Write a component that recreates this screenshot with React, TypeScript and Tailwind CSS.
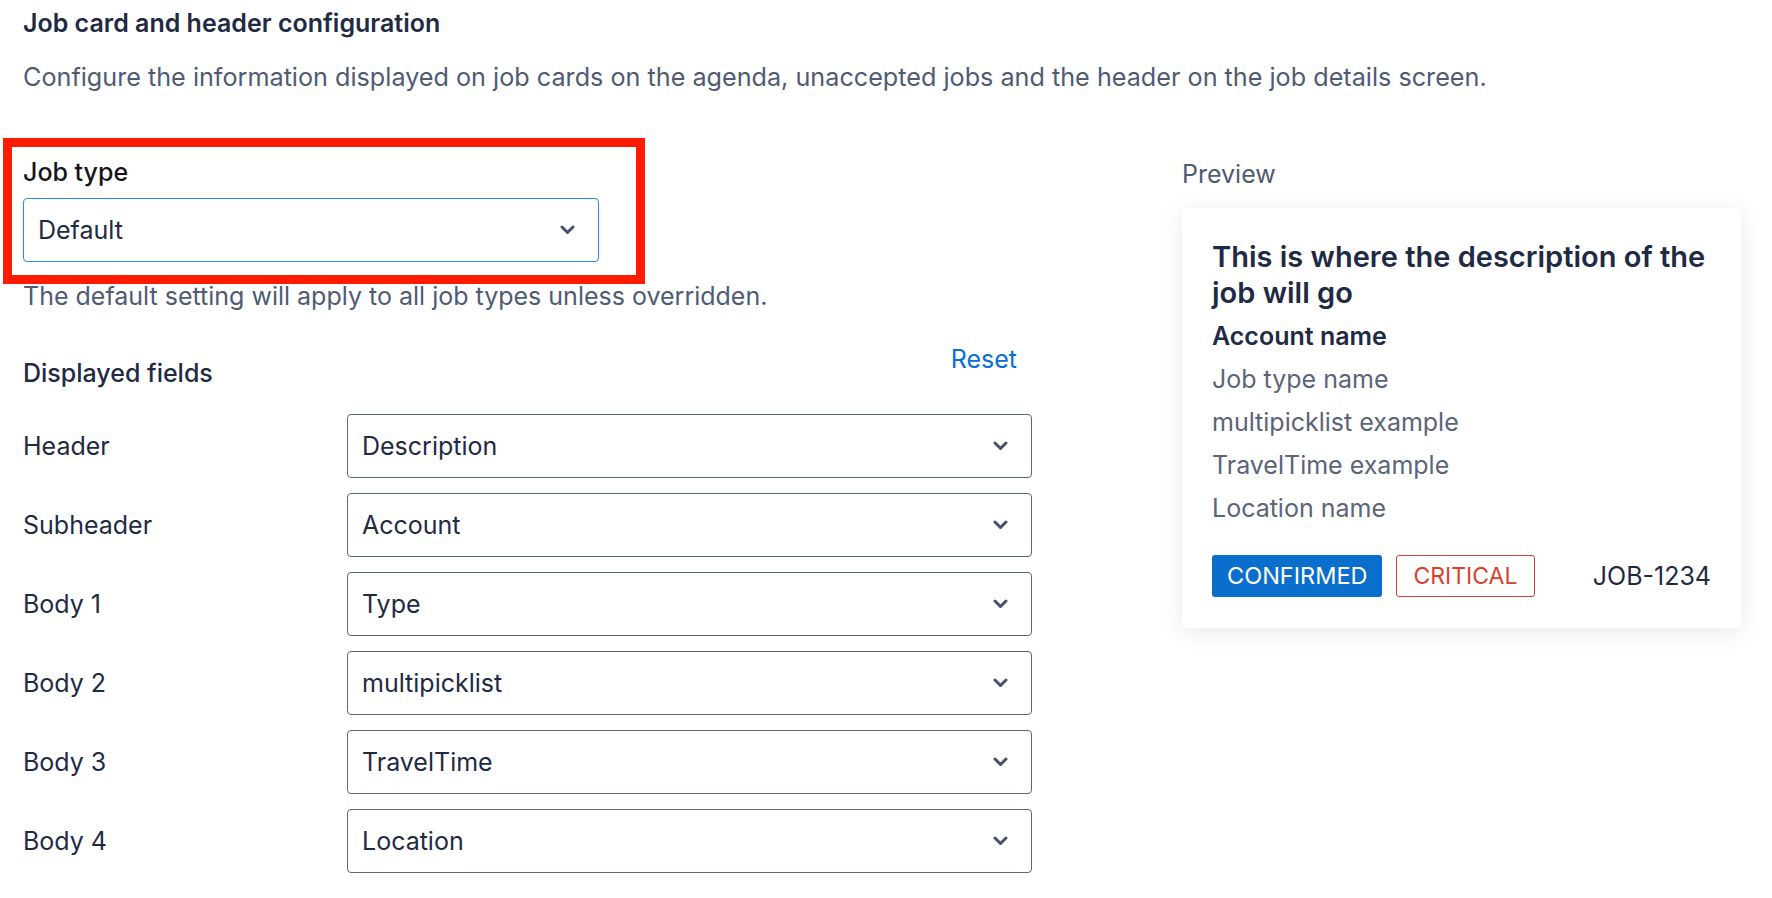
import React from 'react';

function Chevron() {
  return (
    <svg width="15" height="10" viewBox="0 0 15 10" fill="none" className="text-[#46506a]">
      <polyline points="2,2 7.5,7.5 13,2" stroke="currentColor" strokeWidth="3" strokeLinecap="round" strokeLinejoin="round" />
    </svg>
  );
}

function Select({ value, focused }: { value: string; focused?: boolean }) {
  return (
    <div
      className={
        'flex h-[64px] items-center justify-between rounded-[4px] border bg-white pl-[14px] pr-[23px] ' +
        (focused ? 'border-[#2b8be0]' : 'border-[#5c667a]')
      }
    >
      <span className="text-[25px] leading-[30px] text-[#1f2a44]">{value}</span>
      <Chevron />
    </div>
  );
}

export default function App() {
  const fields = [
    { label: 'Header', value: 'Description' },
    { label: 'Subheader', value: 'Account' },
    { label: 'Body 1', value: 'Type' },
    { label: 'Body 2', value: 'multipicklist' },
    { label: 'Body 3', value: 'TravelTime' },
    { label: 'Body 4', value: 'Location' },
  ];

  const bodyLines = ['Job type name', 'multipicklist example', 'TravelTime example', 'Location name'];

  return (
    <div className="min-h-screen bg-white pl-[23px] font-['Inter',sans-serif] text-[#1f2a44]">
      {/* Section header */}
      <h1 className="pt-[8px] text-[25px] font-semibold leading-[30px]">Job card and header configuration</h1>
      <p className="mt-[24px] text-[25.2px] leading-[30px] text-[#4f5b73]">
        Configure the information displayed on job cards on the agenda, unaccepted jobs and the header on the job details screen.
      </p>

      <div className="mt-[46px] flex">
        {/* Left column */}
        <div className="w-[1009px]">
          <div className="-ml-[20px] w-[642px] border-[9px] border-[#ff1a00] pb-[13px] pl-[11px] pr-[37px] pt-[10px]">
            <div className="text-[25px] font-medium leading-[30px] text-[#14161c]">Job type</div>
            <div className="mt-[11px]">
              <Select value="Default" focused />
            </div>
          </div>
          <p className="text-[25px] leading-[24px] text-[#4f5b73]">
            The default setting will apply to all job types unless overridden.
          </p>

          <div className="mt-[36px] flex items-start justify-between">
            <div className="pt-[14px] text-[25px] font-medium leading-[30px]">Displayed fields</div>
            <button className="pr-[15px] text-[25px] leading-[30px] text-[#0a6fd1]">Reset</button>
          </div>

          <div className="mt-[26px] flex flex-col gap-[15px]">
            {fields.map((f) => (
              <div key={f.label} className="flex items-center">
                <div className="w-[324px] text-[25px] leading-[30px] text-[#1f2a44]">{f.label}</div>
                <div className="w-[685px]">
                  <Select value={f.value} />
                </div>
              </div>
            ))}
          </div>
        </div>

        {/* Preview */}
        <div className="ml-[150px] w-[559px]">
          <div className="pt-[21px] text-[25px] leading-[30px] text-[#4f5b73]">Preview</div>
          <div className="mt-[19px] rounded-[6px] bg-white px-[30px] pb-[31px] pt-[31px] shadow-[0_4px_24px_rgba(0,0,0,0.09)]">
            <div className="text-[29px] font-semibold leading-[36px] text-[#1f2a44]">
              This is where the description of the job will go
            </div>
            <div className="mt-[10px] text-[25px] font-semibold leading-[30px] text-[#1f2a44]">Account name</div>
            <div className="mt-[13px] flex flex-col gap-[13px]">
              {bodyLines.map((l) => (
                <div key={l} className="text-[25px] leading-[30px] text-[#5b6478]">
                  {l}
                </div>
              ))}
            </div>
            <div className="mt-[32px] flex items-center justify-between">
              <div className="flex gap-[14px]">
                <span className="rounded-[3px] bg-[#0a6fcc] px-[15px] py-[6px] text-[23.5px] leading-[30px] text-white">
                  CONFIRMED
                </span>
                <span className="rounded-[3px] border border-[#d8412f] px-[16px] py-[5px] text-[23px] leading-[30px] text-[#d8412f]">
                  CRITICAL
                </span>
              </div>
              <span className="text-[25px] leading-[30px] text-[#1f2a44]">JOB-1234</span>
            </div>
          </div>
        </div>
      </div>
    </div>
  );
}
